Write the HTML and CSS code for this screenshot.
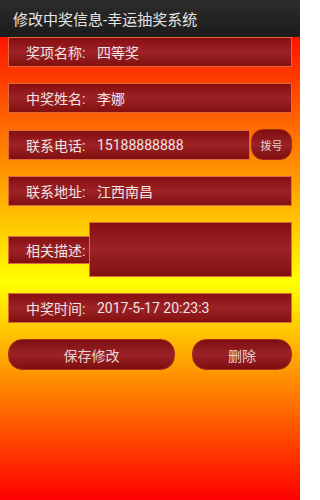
FILE: index.html
```html
<!DOCTYPE html>
<html lang="zh">
<head>
<meta charset="utf-8">
<link rel="stylesheet" href="styles.css">
</head>
<body>
<div class="titlebar">修改中奖信息-幸运抽奖系统</div>
<div class="content">
  <div class="field"><span class="label">奖项名称:</span><span class="value">四等奖</span></div>
  <div class="field"><span class="label">中奖姓名:</span><span class="value">李娜</span></div>
  <div class="phone-row">
    <div class="field phone"><span class="label">联系电话:</span><span class="value">15188888888</span></div>
    <div class="dial">拨号</div>
  </div>
  <div class="field"><span class="label">联系地址:</span><span class="value">江西南昌</span></div>
  <div class="desc-row">
    <div class="field desc-label"><span class="label">相关描述:</span></div>
    <div class="field desc-box"></div>
  </div>
  <div class="field"><span class="label">中奖时间:</span><span class="value">2017-5-17 20:23:3</span></div>
  <div class="btn-row">
    <div class="btn save">保存修改</div>
    <div class="btn del">删除</div>
  </div>
</div>
</body>
</html>
```
FILE: styles.css
```css
html, body {
  margin: 0;
  padding: 0;
}
html {
  background: #ffffff;
}
body {
  width: 300px;
  height: 500px;
  overflow: hidden;
  font-family: Roboto, "Noto Sans CJK SC", sans-serif;
  background: #ff0000;
}
.titlebar {
  height: 37px;
  box-sizing: border-box;
  padding-left: 13px;
  display: flex;
  align-items: center;
  font-size: 15px;
  color: #e4e4e4;
  background: linear-gradient(#2c2c2c, #1c1c1c);
}
.content {
  height: 463px;
  box-sizing: border-box;
  padding: 0 8px 0 8px;
  display: flex;
  flex-direction: column;
  gap: 16px;
  background: linear-gradient(#ff1400 0%, #ffff00 53%, #ff0000 100%);
}
.field {
  height: 30px;
  box-sizing: border-box;
  border: 1px solid #e06a40;
  background: linear-gradient(#860f12 0%, #9c2226 50%, #82100f 100%);
  display: flex;
  align-items: center;
  color: #f0e4e4;
  font-size: 14px;
}
.label {
  padding-left: 17px;
  width: 70px;
  flex: none;
}
.value {
  padding-left: 1px;
}
.phone-row {
  display: flex;
  align-items: center;
  gap: 1px;
}
.phone {
  width: 242px;
}
.dial {
  flex: 1;
  height: 31px;
  box-sizing: border-box;
  border-radius: 12px;
  border: 1px solid #a62a1c;
  background: linear-gradient(#7e0e10 0%, #9a2226 50%, #7e0e10 100%);
  color: #e2d4d4;
  font-size: 11px;
  display: flex;
  align-items: center;
  justify-content: center;
}
.desc-row {
  display: flex;
  align-items: center;
  height: 55px;
}
.desc-label {
  width: 81px;
  height: 28px;
  border-right: none;
}
.desc-box {
  flex: 1;
  height: 55px;
}
.btn-row {
  display: flex;
  gap: 17px;
  height: 31px;
}
.btn {
  height: 31px;
  box-sizing: border-box;
  border-radius: 14px;
  border: 1px solid #a8301c;
  background: linear-gradient(#7e0e10 0%, #9c2226 50%, #7e0e10 100%);
  color: #e0d4d4;
  font-size: 14px;
  display: flex;
  align-items: center;
  justify-content: center;
}
.save {
  width: 167px;
}
.del {
  flex: 1;
}
```
